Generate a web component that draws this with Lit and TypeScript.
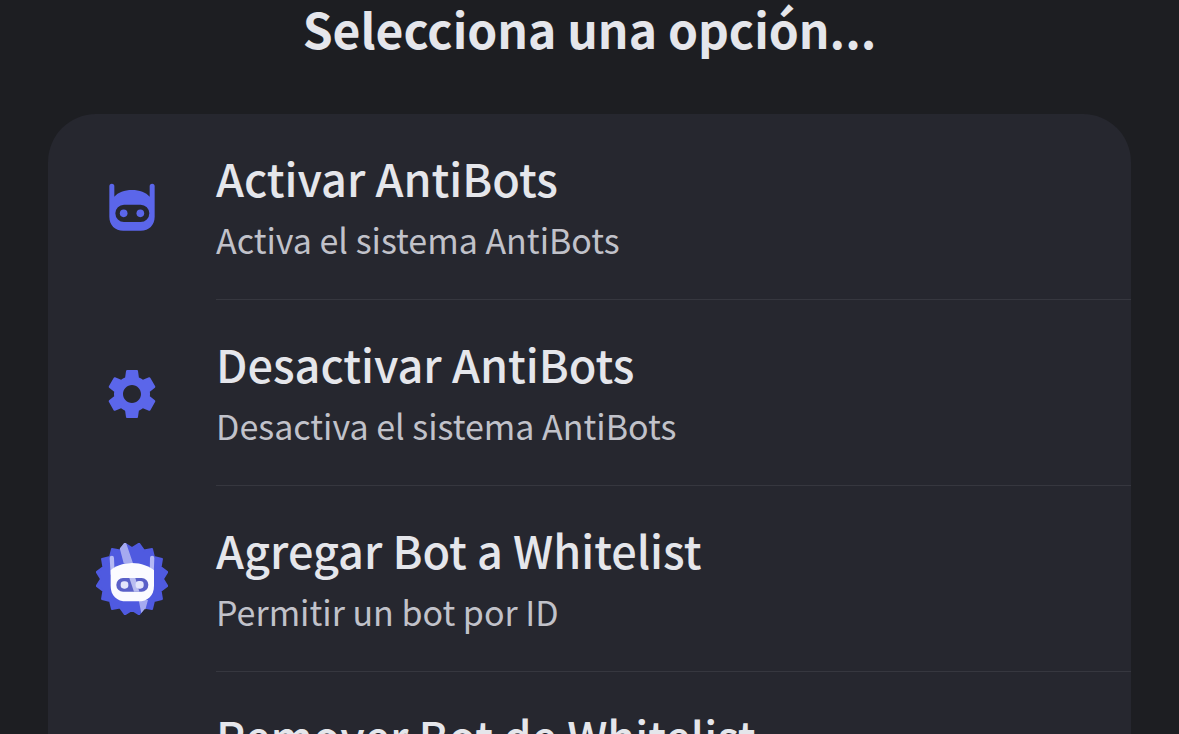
import { LitElement, html, css, svg } from "lit";
import { customElement } from "lit/decorators.js";

// Outline of the scalloped badge: rounded bumps spread evenly round a circle.
const scallops = (teeth: number, outer: number, inner: number): string => {
  const points: string[] = [];
  for (let i = 0; i < teeth * 2; i++) {
    const angle = (Math.PI * i) / teeth - Math.PI / 2 + Math.PI / teeth;
    const radius = i % 2 ? inner : outer;
    points.push(`${(126 + radius * Math.cos(angle)).toFixed(1)},${(132 + radius * Math.sin(angle)).toFixed(1)}`);
  }
  return points.join(" ");
};

const botIcon = html`<svg class="icon" viewBox="18 3 216 216" aria-hidden="true">
  ${svg`<path class="accent" fill-rule="evenodd" d="M58 49a7.500 7.500 0 0 1 15 0V80C84 67 103 60 126 60s42 7 53 20V49a7.500 7.500 0 0 1 15 0v91c0 25-17 42-42 42h-52c-25 0-42-17-42-42zM102 104a26 26 0 0 0 0 52h50a26 26 0 0 0 0-52z"/>
  <circle class="accent" cx="101" cy="130" r="11.500"/><circle class="accent" cx="151" cy="130" r="11.500"/>`}
</svg>`;

const gearIcon = html`<svg class="icon" viewBox="-2.4 -2.8 28.8 28.8" aria-hidden="true">
  ${svg`<path class="accent" d="M19.14 12.94c.04-.3.06-.61.06-.94 0-.32-.02-.64-.07-.94l2.03-1.58c.18-.14.23-.41.12-.61l-1.92-3.32c-.12-.22-.37-.29-.59-.22l-2.39.96c-.5-.38-1.03-.7-1.62-.94l-.36-2.54c-.04-.24-.24-.41-.48-.41h-3.84c-.24 0-.43.17-.47.41l-.36 2.54c-.59.24-1.13.57-1.62.94l-2.39-.96c-.22-.08-.47 0-.59.22L2.74 8.870c-.12.21-.08.47.12.61l2.03 1.58c-.05.3-.09.63-.09.94s.02.64.07.94l-2.03 1.58c-.18.14-.23.41-.12.61l1.920 3.32c.12.22.37.29.59.22l2.39-.96c.5.38 1.03.7 1.62.94l.36 2.54c.05.24.24.41.48.41h3.84c.24 0 .44-.17.47-.41l.36-2.54c.59-.24 1.13-.56 1.62-.94l2.39.96c.22.08.47 0 .59-.22l1.92-3.32c.12-.22.07-.47-.12-.61zM12 15.6c-1.980 0-3.6-1.62-3.6-3.6s1.62-3.6 3.6-3.6 3.6 1.62 3.6 3.6-1.62 3.6-3.6 3.6z"/>`}
</svg>`;

const badgeIcon = html`<svg class="icon" viewBox="18 24 216 216" aria-hidden="true">
  ${svg`<defs><clipPath id="badge"><polygon points=${scallops(16, 112, 98)}/></clipPath></defs>
  <polygon class="seal" points=${scallops(16, 108, 93)}/>
  <g clip-path="url(#badge)">
    <path class="shine" d="M84 20h23l22 65h-28zM146 195h28l-14 50h-4z"/>
  </g>
  <path class="ear" d="M59 69a6 6 0 0 1 13 0l2 50H62zM180 69a6 6 0 0 1 13 0l-2 50h-12z"/>
  <path class="face" d="M62 106C74 94 98 84 126 84s52 10 66 22v46c0 30-18 47-48 47h-34c-30 0-48-17-48-47z"/>
  <rect class="visor" x="79" y="129" width="96" height="41" rx="20"/>
  <path class="glint" d="M118 129h18l12 41h-16z"/>
  <rect class="eye" x="92" y="139" width="23" height="22" rx="10"/>
  <rect class="eye" x="137" y="138" width="24" height="23" rx="10"/>`}
</svg>`;

const options = [
  { label: "Activar AntiBots", detail: "Activa el sistema AntiBots", icon: botIcon },
  { label: "Desactivar AntiBots", detail: "Desactiva el sistema AntiBots", icon: gearIcon },
  { label: "Agregar Bot a Whitelist", detail: "Permitir un bot por ID", icon: badgeIcon },
  { label: "Remover Bot de Whitelist", detail: "", icon: null },
];

@customElement("app-root")
export class AppRoot extends LitElement {
  static styles = css`
    :host {
      display: block;
      height: 100vh;
      overflow: hidden;
      background: #1d1e22;
      color: #e5e6eb;
      font-family: "Noto Sans CJK SC", "Open Sans", sans-serif;
    }
    .sheet {
      padding: 0 48px;
    }
    .title {
      margin: 0;
      padding-bottom: 58px;
      text-align: center;
      font-size: 48px;
      line-height: 56px;
      font-weight: 700;
    }
    .list {
      margin: 0;
      padding: 0;
      list-style: none;
      background: #26272f;
      border-radius: 48px 48px 0 0;
      overflow: hidden;
    }
    .option {
      display: flex;
      gap: 48px;
      width: 100%;
      padding: 0 0 0 48px;
      border: 0;
      background: none;
      color: inherit;
      font: inherit;
      text-align: left;
    }
    .slot {
      flex: none;
      display: flex;
      align-items: center;
      width: 72px;
    }
    .icon {
      display: block;
      width: 72px;
      height: 72px;
    }
    .text {
      flex: 1;
      display: flex;
      flex-direction: column;
      gap: 8px;
      padding: 34px 0 35px;
      border-bottom: 1px solid #36373f;
    }
    .label {
      font-size: 45px;
      line-height: 60px;
      font-weight: 500;
    }
    .detail {
      min-height: 48px;
      font-size: 34px;
      line-height: 48px;
      color: #c1c2ca;
    }
    .accent { fill: #5b66ea; }
    .seal { fill: #4f5ae0; stroke: #4f5ae0; stroke-width: 6; stroke-linejoin: round; }
    .shine { fill: #a5aaf0; }
    .ear { fill: #b4b8f4; }
    .face { fill: #fbfbff; }
    .visor { fill: #5a60c8; }
    .glint { fill: #b9bdf0; }
    .eye { fill: #e3e5fb; }
  `;

  render() {
    return html`<main class="sheet">
      <h1 class="title">Selecciona una opción...</h1>
      <ul class="list">
        ${options.map(
          (option) => html`<li>
            <button class="option" type="button">
              <span class="slot">${option.icon}</span>
              <span class="text">
                <span class="label">${option.label}</span>
                <span class="detail">${option.detail}</span>
              </span>
            </button>
          </li>`,
        )}
      </ul>
    </main>`;
  }
}
